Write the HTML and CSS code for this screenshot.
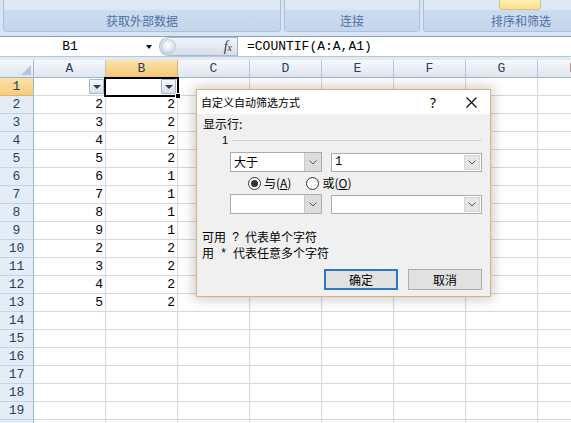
FILE: index.html
```html
<!DOCTYPE html>
<html lang="zh">
<head>
<meta charset="utf-8">
<title>Excel 自定义自动筛选</title>
<link rel="stylesheet" href="styles.css">
</head>
<body>
<div class="ribbon">
  <div class="group g1"><div class="glabel">获取外部数据</div></div>
  <div class="group g2"><div class="glabel">连接</div></div>
  <div class="group g3"><div class="sorticon"></div><div class="glabel">排序和筛选</div></div>
</div>
<div class="fbar">
  <div class="namebox"><span class="nbtext">B1</span><span class="nbarrow"></span></div>
  <div class="fxpill"><span class="knob"></span><span class="fx">f<span class="fxsub">x</span></span></div>
  <div class="finput">=COUNTIF(A:A,A1)</div>
</div>
<div class="gap"></div>
<div class="sheet">
  <div class="corner"><span class="tri"></span></div>
  <div class="ch">A</div><div class="ch on">B</div><div class="ch">C</div><div class="ch">D</div><div class="ch">E</div><div class="ch">F</div><div class="ch">G</div><div class="ch">H</div>

  <div class="rh on">1</div>
  <div class="c flt"><span class="fb"><span class="fbtri"></span></span></div>
  <div class="c flt sel"><span class="fb"><span class="fbtri"></span></span><span class="handle"></span></div>
  <div></div><div></div><div></div><div></div><div></div><div></div>

  <div class="rh">2</div><div class="c">2</div><div class="c">2</div><div></div><div></div><div></div><div></div><div></div><div></div>
  <div class="rh">3</div><div class="c">3</div><div class="c">2</div><div></div><div></div><div></div><div></div><div></div><div></div>
  <div class="rh">4</div><div class="c">4</div><div class="c">2</div><div></div><div></div><div></div><div></div><div></div><div></div>
  <div class="rh">5</div><div class="c">5</div><div class="c">2</div><div></div><div></div><div></div><div></div><div></div><div></div>
  <div class="rh">6</div><div class="c">6</div><div class="c">1</div><div></div><div></div><div></div><div></div><div></div><div></div>
  <div class="rh">7</div><div class="c">7</div><div class="c">1</div><div></div><div></div><div></div><div></div><div></div><div></div>
  <div class="rh">8</div><div class="c">8</div><div class="c">1</div><div></div><div></div><div></div><div></div><div></div><div></div>
  <div class="rh">9</div><div class="c">9</div><div class="c">1</div><div></div><div></div><div></div><div></div><div></div><div></div>
  <div class="rh">10</div><div class="c">2</div><div class="c">2</div><div></div><div></div><div></div><div></div><div></div><div></div>
  <div class="rh">11</div><div class="c">3</div><div class="c">2</div><div></div><div></div><div></div><div></div><div></div><div></div>
  <div class="rh">12</div><div class="c">4</div><div class="c">2</div><div></div><div></div><div></div><div></div><div></div><div></div>
  <div class="rh">13</div><div class="c">5</div><div class="c">2</div><div></div><div></div><div></div><div></div><div></div><div></div>
  <div class="rh">14</div><div></div><div></div><div></div><div></div><div></div><div></div><div></div><div></div>
  <div class="rh">15</div><div></div><div></div><div></div><div></div><div></div><div></div><div></div><div></div>
  <div class="rh">16</div><div></div><div></div><div></div><div></div><div></div><div></div><div></div><div></div>
  <div class="rh">17</div><div></div><div></div><div></div><div></div><div></div><div></div><div></div><div></div>
  <div class="rh">18</div><div></div><div></div><div></div><div></div><div></div><div></div><div></div><div></div>
  <div class="rh">19</div><div></div><div></div><div></div><div></div><div></div><div></div><div></div><div></div>
  <div class="rh">20</div><div></div><div></div><div></div><div></div><div></div><div></div><div></div><div></div>
</div>

<div class="dlg">
  <div class="dtitle">
    <span class="dtext">自定义自动筛选方式</span>
    <span class="dhelp">?</span>
    <span class="dclose"><svg width="11" height="11" viewBox="0 0 11 11"><path d="M0.5 0.5L10.5 10.5M10.5 0.5L0.5 10.5" stroke="#000" stroke-width="1.1" fill="none"/></svg></span>
  </div>
  <div class="dbody">
    <div class="showlbl">显示行:</div>
    <div class="fieldrow"><span class="fieldname">1</span><span class="rule"></span></div>
    <div class="crow">
      <div class="combo list"><span class="cval">大于</span><span class="cbtn"><svg width="8" height="5" viewBox="0 0 8 5"><path d="M0.5 0.5L4 4L7.5 0.5" stroke="#5a5a5a" fill="none"/></svg></span></div>
      <div class="combo edit"><span class="cval">1</span><span class="cbtn"><svg width="8" height="5" viewBox="0 0 8 5"><path d="M0.5 0.5L4 4L7.5 0.5" stroke="#5a5a5a" fill="none"/></svg></span></div>
    </div>
    <div class="radios">
      <span class="radio on"></span><span class="rlbl">与(<u>A</u>)</span>
      <span class="radio"></span><span class="rlbl">或(<u>O</u>)</span>
    </div>
    <div class="crow">
      <div class="combo list"><span class="cval"></span><span class="cbtn"><svg width="8" height="5" viewBox="0 0 8 5"><path d="M0.5 0.5L4 4L7.5 0.5" stroke="#5a5a5a" fill="none"/></svg></span></div>
      <div class="combo edit"><span class="cval"></span><span class="cbtn"><svg width="8" height="5" viewBox="0 0 8 5"><path d="M0.5 0.5L4 4L7.5 0.5" stroke="#5a5a5a" fill="none"/></svg></span></div>
    </div>
    <div class="hint first">可用<span class="sym">?</span>代表单个字符</div>
    <div class="hint">用<span class="sym">*</span>代表任意多个字符</div>
    <div class="btns"><button class="btn def">确定</button><button class="btn">取消</button></div>
  </div>
</div>
</body>
</html>
```

FILE: styles.css
```css
* { box-sizing: border-box; margin: 0; padding: 0; }
html, body { width: 571px; height: 423px; overflow: hidden; }
body {
  margin: 0;
  background: #fff;
  font-family: "Liberation Mono", monospace;
  font-size: 13px;
  position: relative;
}

/* ribbon */
.ribbon {
  height: 36px;
  background: #d7e4f3;
  display: flex;
  gap: 3px;
  padding-left: 3px;
  align-items: flex-start;
  overflow: hidden;
}
.group {
  height: 32px;
  flex-shrink: 0;
  border: 1px solid #a9c0dd;
  border-top: none;
  border-radius: 0 0 4px 4px;
  background: linear-gradient(#dfe9f6, #d9e5f4);
  display: flex;
  flex-direction: column;
}
.g1 { width: 278px; }
.g2 { width: 136px; }
.g3 { width: 196px; }
.glabel {
  margin-top: auto;
  height: 21px;
  background: linear-gradient(#cddcef, #c4d6ec);
  border-radius: 0 0 3px 3px;
  font-family: "Noto Sans CJK SC", sans-serif;
  font-size: 12px;
  line-height: 21px;
  color: #4f71a6;
  text-align: center;
}
.sorticon {
  margin-left: 75px;
  width: 42px;
  height: 10px;
  background: linear-gradient(#fdf0b8, #fbe08a);
  border: 1px solid #e2bf6a;
  border-top: none;
  border-radius: 0 0 4px 4px;
}

/* formula bar */
.fbar {
  height: 21px;
  display: flex;
  border-top: 1px solid #8aa1c0;
  border-bottom: 1px solid #b6c6db;
  background: #fff;
}
.namebox {
  width: 156px;
  display: flex;
  align-items: center;
}
.nbtext { width: 140px; text-align: center; color: #000; }
.nbarrow {
  margin-left: 6px;
  width: 0; height: 0;
  border-left: 3.5px solid transparent;
  border-right: 3.5px solid transparent;
  border-top: 4px solid #111;
}
.fxpill {
  margin-left: 3px;
  width: 78px;
  height: 19px;
  border: 1px solid #a9b9ce;
  border-right: none;
  border-radius: 10px 0 0 10px;
  background: linear-gradient(#f1f5fa, #d4deea);
  display: flex;
  align-items: center;
}
.knob {
  width: 15px; height: 15px;
  margin-left: 1px;
  border-radius: 50%;
  background: radial-gradient(circle at 45% 40%, #ffffff 0, #e6ebf1 45%, #b9c3cf 100%);
  border: 1px solid #c3ccd8;
}
.fx {
  margin-left: auto;
  margin-right: 5px;
  font-family: "Liberation Serif", serif;
  font-style: italic;
  font-size: 14px;
  color: #3a3a3a;
}
.fxsub { font-size: 10px; }
.finput {
  flex: 1;
  border-left: 1px solid #9fb2ca;
  padding-left: 9px;
  line-height: 19px;
  color: #000;
  white-space: nowrap;
}
.gap { height: 3px; background: #e2e9f3; }

/* sheet */
.sheet {
  display: grid;
  grid-template-columns: 34px repeat(8, 72px);
  grid-auto-rows: 18px;
  width: 571px;
  overflow: hidden;
}
.sheet > div {
  border-right: 1px solid #d0d7e5;
  border-bottom: 1px solid #d0d7e5;
  line-height: 17px;
  color: #000;
}
.sheet > .corner {
  background: linear-gradient(#f6f8fb, #dfe6f0);
  border-right: 1px solid #9eb6ce;
  border-bottom: 1px solid #9eb6ce;
  display: flex;
  align-items: flex-end;
  justify-content: flex-end;
  padding: 0 2px 2px 0;
}
.tri {
  width: 0; height: 0;
  border-left: 10px solid transparent;
  border-bottom: 10px solid #b9c6d7;
}
.sheet > .ch {
  background: linear-gradient(#f7f9fc, #dde5ef);
  border-right: 1px solid #b4c6db;
  border-bottom: 1px solid #9eb6ce;
  text-align: center;
  color: #27415f;
}
.sheet > .ch.on {
  background: linear-gradient(#fbe3b0, #f5c872);
  border-right-color: #e5b35e;
  border-bottom-color: #e0a94a;
}
.sheet > .rh {
  background: #e4ecf7;
  border-right: 1px solid #9eb6ce;
  border-bottom: 1px solid #c5d2e3;
  text-align: center;
  color: #27415f;
}
.sheet > .rh.on {
  background: linear-gradient(#fbe0a8, #f6cd7e);
  border-bottom-color: #e0b46a;
}
.sheet > .c {
  text-align: right;
  padding-right: 2px;
}
.sheet > .flt {
  display: flex;
  align-items: center;
  justify-content: flex-end;
  padding-right: 1px;
}
.fb {
  width: 15px; height: 15px;
  border: 1px solid #a9b6c8;
  border-radius: 1px;
  background: linear-gradient(#f5f7fa, #d8dfe9);
  display: flex;
  align-items: center;
  justify-content: center;
}
.fbtri {
  width: 0; height: 0;
  border-left: 4px solid transparent;
  border-right: 4px solid transparent;
  border-top: 4px solid #2b3d5c;
}
.sheet > .sel { position: relative; }
.sel::before {
  content: "";
  position: absolute;
  left: -2px; top: -1px; right: -2px; bottom: -2px;
  border: 2px solid #000;
  pointer-events: none;
}
.handle {
  position: absolute;
  right: -4px; bottom: -4px;
  width: 6px; height: 6px;
  background: #000;
  border: 1px solid #fff;
}

/* dialog */
.dlg {
  position: absolute;
  left: 196px;
  top: 89px;
  width: 295px;
  height: 208px;
  border: 1px solid #dcb27a;
  background: #f0f0f0;
  box-shadow: 0 0 12px 2px rgba(0,0,0,0.22);
  font-family: "Noto Sans CJK SC", sans-serif;
  font-size: 12px;
  color: #000;
  display: flex;
  flex-direction: column;
}
.dtitle {
  height: 24px;
  background: #fff;
  display: flex;
  align-items: center;
}
.dtext { flex: 1; padding-left: 4px; font-size: 11px; }
.dhelp { width: 38px; text-align: center; font-family: "Noto Sans", sans-serif; font-size: 14px; }
.dclose { width: 38px; display: flex; justify-content: center; align-items: center; }
.dbody { flex: 1; display: flex; flex-direction: column; }
.showlbl { margin: 3px 0 0 6px; height: 14px; line-height: 14px; }
.fieldrow { margin: 2px 8px 0 0; height: 14px; display: flex; align-items: center; }
.fieldname {
  margin-left: 25px;
  width: 10px;
  font-family: "Liberation Sans", sans-serif;
  font-size: 11px;
  line-height: 11px;
}
.rule { flex: 1; height: 1px; background: #d2d2d2; }
.crow { margin: 5px 0 0 33px; display: flex; gap: 9px; height: 20px; align-items: center; }
.radios + .crow { margin-top: 4px; }
.combo {
  height: 20px;
  background: #fff;
  border: 1px solid #acacac;
  display: flex;
  align-items: center;
}
.combo.list { width: 92px; }
.combo.edit { width: 151px; height: 19px; }
.cval { flex: 1; padding-left: 3px; line-height: 18px; }
.combo.edit .cval { padding-left: 3px; font-family: "Liberation Mono", monospace; }
.cbtn { display: flex; align-items: center; justify-content: center; }
.combo.list .cbtn {
  width: 17px; height: 18px;
  background: #dcdcdc;
  border-left: 1px solid #c9c9c9;
}
.combo.edit .cbtn {
  width: 16px; height: 15px;
  margin-right: 1px;
  background: #e6e6e6;
  border: 1px solid #d4d4d4;
}
.radios {
  margin: 4px 0 0 51px;
  height: 14px;
  display: flex;
  align-items: center;
}
.radio {
  width: 13px; height: 13px;
  border-radius: 50%;
  border: 1px solid #333;
  background: #fff;
  display: flex;
  align-items: center;
  justify-content: center;
}
.radio.on::after {
  content: "";
  width: 7px; height: 7px;
  border-radius: 50%;
  background: #333;
}
.rlbl { margin-left: 3px; margin-right: 15px; line-height: 14px; }
.rlbl u { text-underline-offset: 1px; }
.hint { margin-left: 5px; height: 16px; line-height: 16px; display: flex; }
.hint.first { margin-top: 15px; }
.sym { width: 19px; text-align: center; font-family: "Liberation Sans", sans-serif; }
.btns { margin-top: 8px; display: flex; justify-content: flex-end; gap: 10px; padding-right: 8px; }
.btn {
  width: 74px; height: 21px;
  background: #e1e1e1;
  border: 1px solid #adadad;
  font-family: "Noto Sans CJK SC", sans-serif;
  font-size: 12px;
  color: #000;
}
.btn.def { border: 2px solid #2d78c4; }
```
